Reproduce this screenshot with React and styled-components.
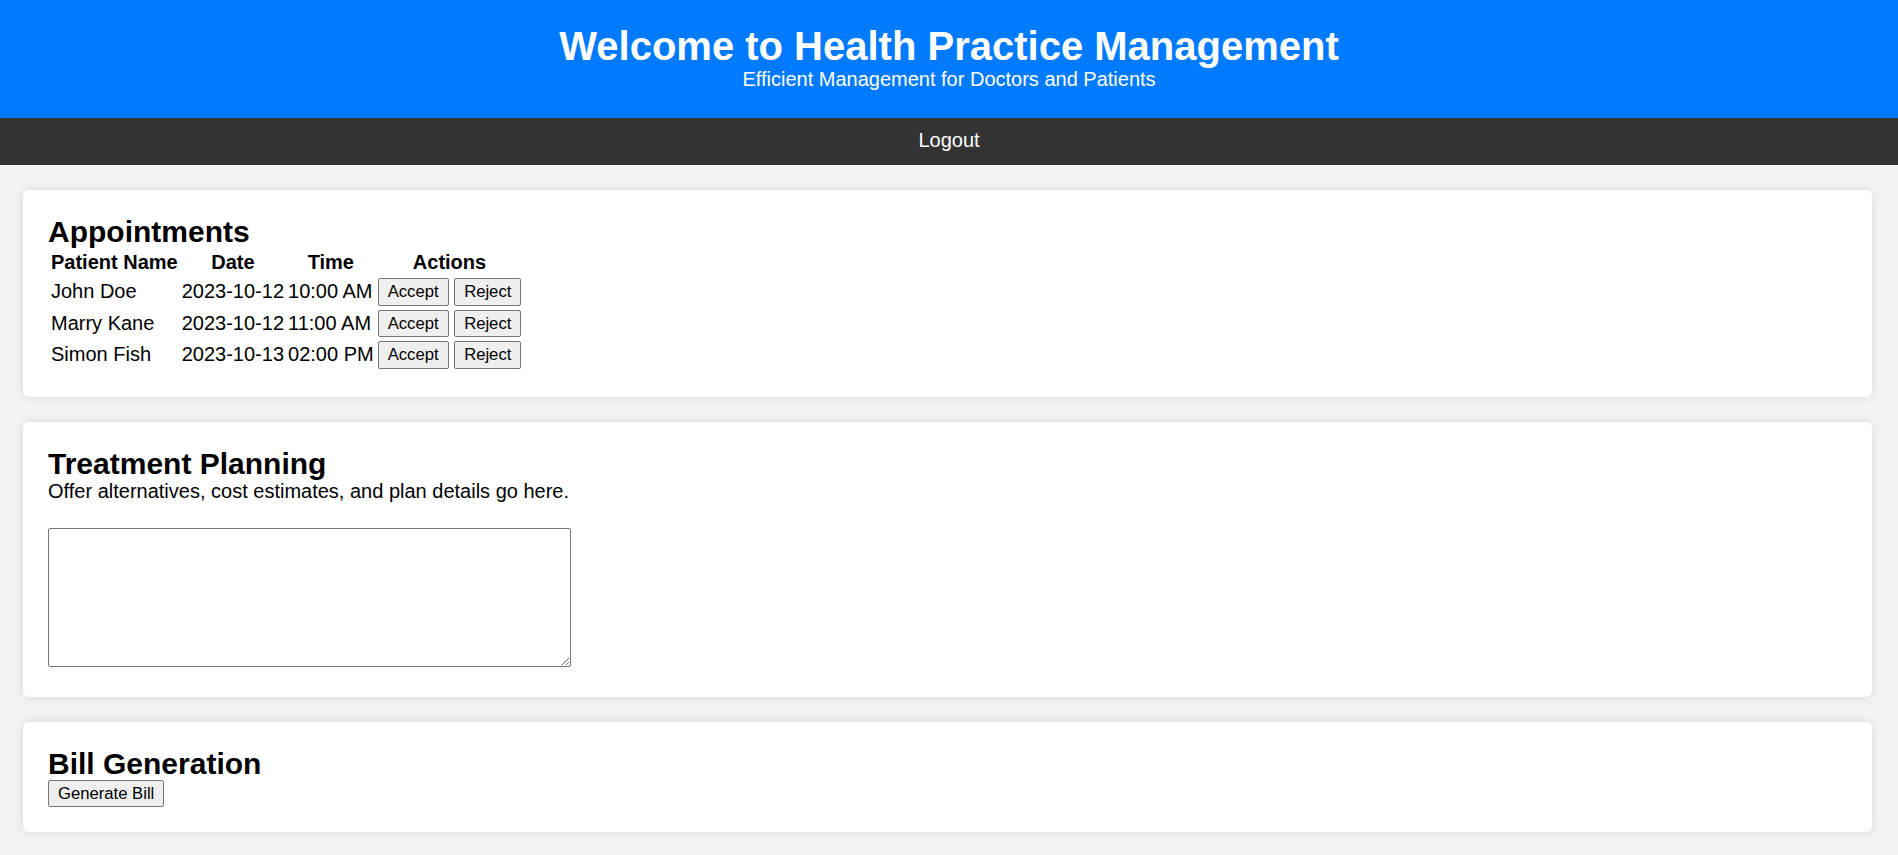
import React from 'react';
import styled, { createGlobalStyle } from 'styled-components';

//----Styled Components----//
const GlobalStyle = createGlobalStyle`
  body {
    margin: 0;
    background: #f4f4f4;
    font-family: "Liberation Sans", Arial, sans-serif;
    font-size: 20px;
    color: #000;
  }
`;

const Header = styled.header`
  background: #007bff;
  color: #fff;
  text-align: center;
  padding: 25px 0 27px;
  h1 {
    margin: 0;
    font-size: 40px;
    line-height: 1.08;
  }
  p {
    margin: 0;
    font-size: 20px;
    line-height: 23px;
  }
`;

const Nav = styled.nav`
  background: #333;
  text-align: center;
  padding: 11px 0 13px;
  line-height: 23px;
  a {
    color: #fff;
    text-decoration: none;
    font-size: 20px;
  }
`;

const Main = styled.main`
  display: flex;
  flex-direction: column;
  gap: 25px;
  padding: 25px 26px 20px 23px;
`;

const Card = styled.section`
  background: #fff;
  border-radius: 6px;
  box-shadow: 0 0 12px rgba(0, 0, 0, 0.12);
  padding: 25px;
  h2 {
    margin: 0;
    font-size: 30px;
    line-height: 1.1;
  }
`;

const Table = styled.table`
  border-spacing: 2px;
  font-size: 20px;
  th, td {
    padding: 1px;
    line-height: 23px;
  }
  th {
    text-align: center;
  }
`;

const Button = styled.button`
  font-family: "Liberation Sans", Arial, sans-serif;
  font-size: 16.67px;
  line-height: 19.5px;
  padding: 3px 9px;
  border: 1px solid #767676;
  border-radius: 2px;
  background: #efefef;
  color: #000;
  cursor: pointer;
`;

const Description = styled.p`
  margin: 0 0 25px;
  line-height: 23px;
`;

const PlanInput = styled.textarea`
  display: block;
  box-sizing: border-box;
  width: 523px;
  height: 139px;
  margin: 0 0 5px;
  border: 1px solid #767676;
  border-radius: 2px;
  font-family: "Liberation Sans", Arial, sans-serif;
  font-size: 16px;
`;
//----End of Styled Components----//

const appointments = [
  { name: 'John Doe', date: '2023-10-12', time: '10:00 AM' },
  { name: 'Marry Kane', date: '2023-10-12', time: '11:00 AM' },
  { name: 'Simon Fish', date: '2023-10-13', time: '02:00 PM' },
];

export default function App() {
  return (
    <>
      <GlobalStyle />
      <Header>
        <h1>Welcome to Health Practice Management</h1>
        <p>Efficient Management for Doctors and Patients</p>
      </Header>
      <Nav>
        <a href="#logout">Logout</a>
      </Nav>
      <Main>
        <Card>
          <h2>Appointments</h2>
          <Table>
            <thead>
              <tr>
                <th>Patient Name</th>
                <th>Date</th>
                <th>Time</th>
                <th>Actions</th>
              </tr>
            </thead>
            <tbody>
              {appointments.map((a) => (
                <tr key={a.name}>
                  <td>{a.name}</td>
                  <td>{a.date}</td>
                  <td>{a.time}</td>
                  <td>
                    <Button>Accept</Button> <Button>Reject</Button>
                  </td>
                </tr>
              ))}
            </tbody>
          </Table>
        </Card>
        <Card>
          <h2>Treatment Planning</h2>
          <Description>Offer alternatives, cost estimates, and plan details go here.</Description>
          <PlanInput />
        </Card>
        <Card>
          <h2>Bill Generation</h2>
          <Button>Generate Bill</Button>
        </Card>
      </Main>
    </>
  );
}
